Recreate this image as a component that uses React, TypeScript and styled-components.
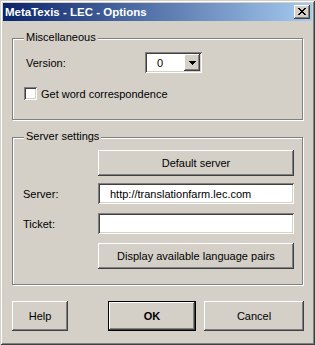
import React from "react";
import styled, { createGlobalStyle } from "styled-components";

const FACE = "#d4d0c8";
const SHADOW = "#808080";
const DARK = "#404040";
const LIGHT = "#ffffff";

const GlobalStyle = createGlobalStyle`
  html, body {
    margin: 0;
    padding: 0;
    background: ${FACE};
  }
  body {
    font-family: "Liberation Sans", Arial, sans-serif;
    font-size: 11px;
    color: #000;
  }
`;

const Window = styled.div`
  box-sizing: border-box;
  width: 315px;
  height: 345px;
  padding: 3px;
  background: ${FACE};
  box-shadow: inset 1px 1px 0 ${FACE}, inset -1px -1px 0 ${DARK},
    inset 2px 2px 0 ${LIGHT}, inset -2px -2px 0 ${SHADOW};
  display: flex;
  flex-direction: column;
`;

const TitleBar = styled.div`
  flex: none;
  height: 18px;
  padding: 0 2px;
  display: flex;
  align-items: center;
  justify-content: space-between;
  background: linear-gradient(to right, #0a246a, #a6caf0);
`;

const TitleText = styled.span`
  color: #fff;
  font-weight: bold;
  font-size: 11.5px;
  line-height: 13px;
  white-space: nowrap;
`;

const raised = `
  background: ${FACE};
  box-shadow: inset -1px -1px 0 ${DARK}, inset 1px 1px 0 ${LIGHT},
    inset -2px -2px 0 ${SHADOW}, inset 2px 2px 0 ${FACE};
`;

const sunken = `
  background: ${LIGHT};
  box-shadow: inset 1px 1px 0 ${SHADOW}, inset -1px -1px 0 ${LIGHT},
    inset 2px 2px 0 ${DARK}, inset -2px -2px 0 ${FACE};
`;

const CaptionButton = styled.div`
  ${raised}
  width: 16px;
  height: 14px;
  display: flex;
  align-items: center;
  justify-content: center;
  padding-bottom: 1px;
  box-sizing: border-box;
`;

const Group = styled.div<{ $top: number; $height: number; $pad: number }>`
  box-sizing: border-box;
  height: ${(p) => p.$height}px;
  margin: ${(p) => p.$top}px 9px 0 9px;
  padding: 0 8px 0 ${(p) => p.$pad}px;
  border: 1px solid ${SHADOW};
  box-shadow: inset 1px 1px 0 ${LIGHT}, 1px 1px 0 ${LIGHT};
  display: flex;
  flex-direction: column;
  align-items: flex-start;
`;

const GroupTitle = styled.span<{ $indent: number }>`
  margin: -8px 0 0 ${(p) => p.$indent}px;
  padding: 0 2px;
  line-height: 13px;
  background: ${FACE};
  white-space: nowrap;
`;

const Row = styled.div<{ $top: number }>`
  display: flex;
  align-items: center;
  margin-top: ${(p) => p.$top}px;
`;

const Label = styled.span<{ $width: number; $indent?: number }>`
  width: ${(p) => p.$width}px;
  padding-left: ${(p) => p.$indent ?? 0}px;
  box-sizing: border-box;
  flex: none;
  white-space: nowrap;
`;

const Combo = styled.div`
  ${sunken}
  box-sizing: border-box;
  width: 57px;
  height: 21px;
  padding: 2px 2px 2px 12px;
  display: flex;
  align-items: center;
  justify-content: space-between;
`;

const DropButton = styled.div`
  ${raised}
  width: 16px;
  height: 17px;
  display: flex;
  align-items: center;
  justify-content: center;
`;

const CheckBox = styled.div`
  ${sunken}
  width: 13px;
  height: 13px;
  flex: none;
  margin-right: 4px;
`;

const Field = styled.input`
  ${sunken}
  box-sizing: border-box;
  width: 196px;
  height: 21px;
  border: none;
  outline: none;
  margin: 0;
  padding: 0 4px 0 12px;
  font: inherit;
  color: #000;
`;

const PushButton = styled.div<{ $width: number; $left?: number; $default?: boolean }>`
  box-sizing: border-box;
  width: ${(p) => p.$width}px;
  margin-left: ${(p) => p.$left ?? 0}px;
  display: flex;
  align-items: center;
  justify-content: center;
  white-space: nowrap;
  background: ${FACE};
  font-weight: ${(p) => (p.$default ? "bold" : "normal")};
  box-shadow: ${(p) =>
    p.$default
      ? `inset 0 0 0 1px #000, inset -2px -2px 0 ${DARK}, inset 2px 2px 0 ${LIGHT}, inset -3px -3px 0 ${SHADOW}`
      : `inset -1px -1px 0 ${DARK}, inset 1px 1px 0 ${LIGHT}, inset -2px -2px 0 ${SHADOW}, inset 2px 2px 0 ${FACE}`};
`;

const GroupButton = styled(PushButton)`
  height: 26px;
`;

const ButtonBar = styled.div`
  display: flex;
  margin: 16px 0 0 9px;
  height: 30px;
  & > * {
    height: 30px;
  }
`;

function CloseGlyph() {
  const rows = ["11000011", "01100110", "00111100", "00011000", "00111100", "01100110", "11000011"];
  return (
    <svg width="8" height="7" viewBox="0 0 8 7" shapeRendering="crispEdges">
      {rows.flatMap((row, y) =>
        row.split("").map((c, x) =>
          c === "1" ? <rect key={`${x}-${y}`} x={x} y={y} width="1" height="1" fill="#000" /> : null
        )
      )}
    </svg>
  );
}

function DownArrow() {
  return (
    <svg width="7" height="4" viewBox="0 0 7 4" shapeRendering="crispEdges">
      <path d="M0 0h7v1H0zM1 1h5v1H1zM2 2h3v1H2zM3 3h1v1H3z" fill="#000" />
    </svg>
  );
}

export default function App() {
  return (
    <>
      <GlobalStyle />
      <Window>
        <TitleBar>
          <TitleText>MetaTexis - LEC - Options</TitleText>
          <CaptionButton>
            <CloseGlyph />
          </CaptionButton>
        </TitleBar>

        <Group $top={17} $height={82} $pad={11}>
          <GroupTitle $indent={0}>Miscellaneous</GroupTitle>
          <Row $top={8}>
            <Label $width={121} $indent={2}>
              Version:
            </Label>
            <Combo>
              <span>0</span>
              <DropButton>
                <DownArrow />
              </DropButton>
            </Combo>
          </Row>
          <Row $top={14}>
            <CheckBox />
            <span>Get word correspondence</span>
          </Row>
        </Group>

        <Group $top={17} $height={148} $pad={10}>
          <GroupTitle $indent={1}>Server settings</GroupTitle>
          <Row $top={7}>
            <GroupButton $width={196} $left={75}>
              Default server
            </GroupButton>
          </Row>
          <Row $top={7}>
            <Label $width={75}>Server:</Label>
            <Field readOnly value="http://translationfarm.lec.com" />
          </Row>
          <Row $top={9}>
            <Label $width={75}>Ticket:</Label>
            <Field readOnly value="" />
          </Row>
          <Row $top={9}>
            <GroupButton $width={196} $left={75}>
              Display available language pairs
            </GroupButton>
          </Row>
        </Group>

        <ButtonBar>
          <PushButton $width={56}>Help</PushButton>
          <PushButton $width={88} $left={40} $default>
            OK
          </PushButton>
          <PushButton $width={100} $left={8}>
            Cancel
          </PushButton>
        </ButtonBar>
      </Window>
    </>
  );
}
